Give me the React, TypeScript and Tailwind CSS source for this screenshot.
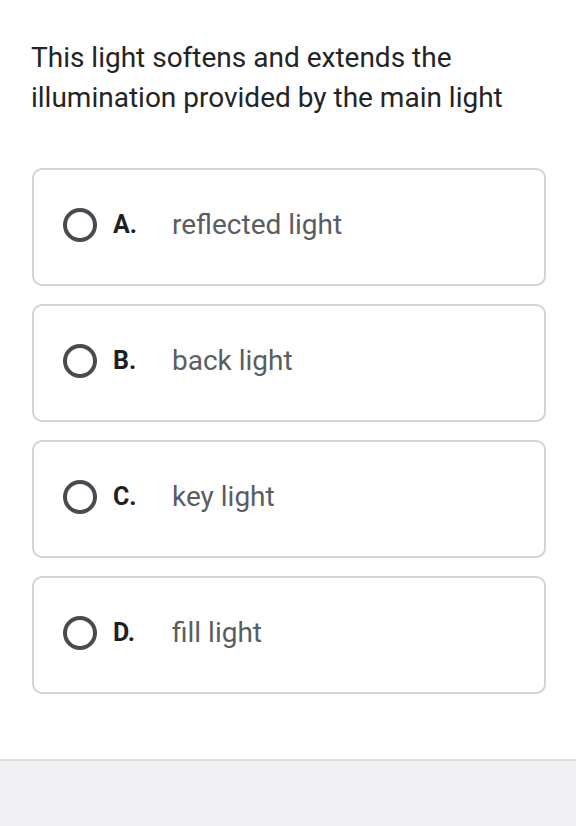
const options = [
  { letter: "A.", text: "reflected light" },
  { letter: "B.", text: "back light" },
  { letter: "C.", text: "key light" },
  { letter: "D.", text: "fill light" },
];

function Radio() {
  return (
    <span className="w-[34px] h-[34px] rounded-full border-[4px] border-[#4a4b50] flex-shrink-0" />
  );
}

export default function App() {
  return (
    <div
      className="w-[576px] h-[826px] bg-white flex flex-col"
      style={{ fontFamily: "Roboto, 'Liberation Sans', sans-serif" }}
    >
      <div className="flex-1 pl-[32px] pr-[30px] pt-[38px]">
        <p className="text-[28px] leading-[40px] text-[#242424] -ml-[1px]">
          This light softens and extends the illumination provided by the main light
        </p>
        <div className="mt-[50px] flex flex-col gap-[18px]">
          {options.map((o) => (
            <div
              key={o.letter}
              className="h-[118px] rounded-[10px] border-2 border-[#d3d3d3] flex items-center pl-[29px] pb-[4px]"
            >
              <Radio />
              <span className="ml-[16px] w-[59px] text-[25px] font-bold text-[#1f1f1f]">
                {o.letter}
              </span>
              <span className="text-[28px] text-[#5a5d61]">{o.text}</span>
            </div>
          ))}
        </div>
      </div>
      <div className="h-[67px] bg-[#f1f1f3] border-t-2 border-[#dedede]" />
    </div>
  );
}
